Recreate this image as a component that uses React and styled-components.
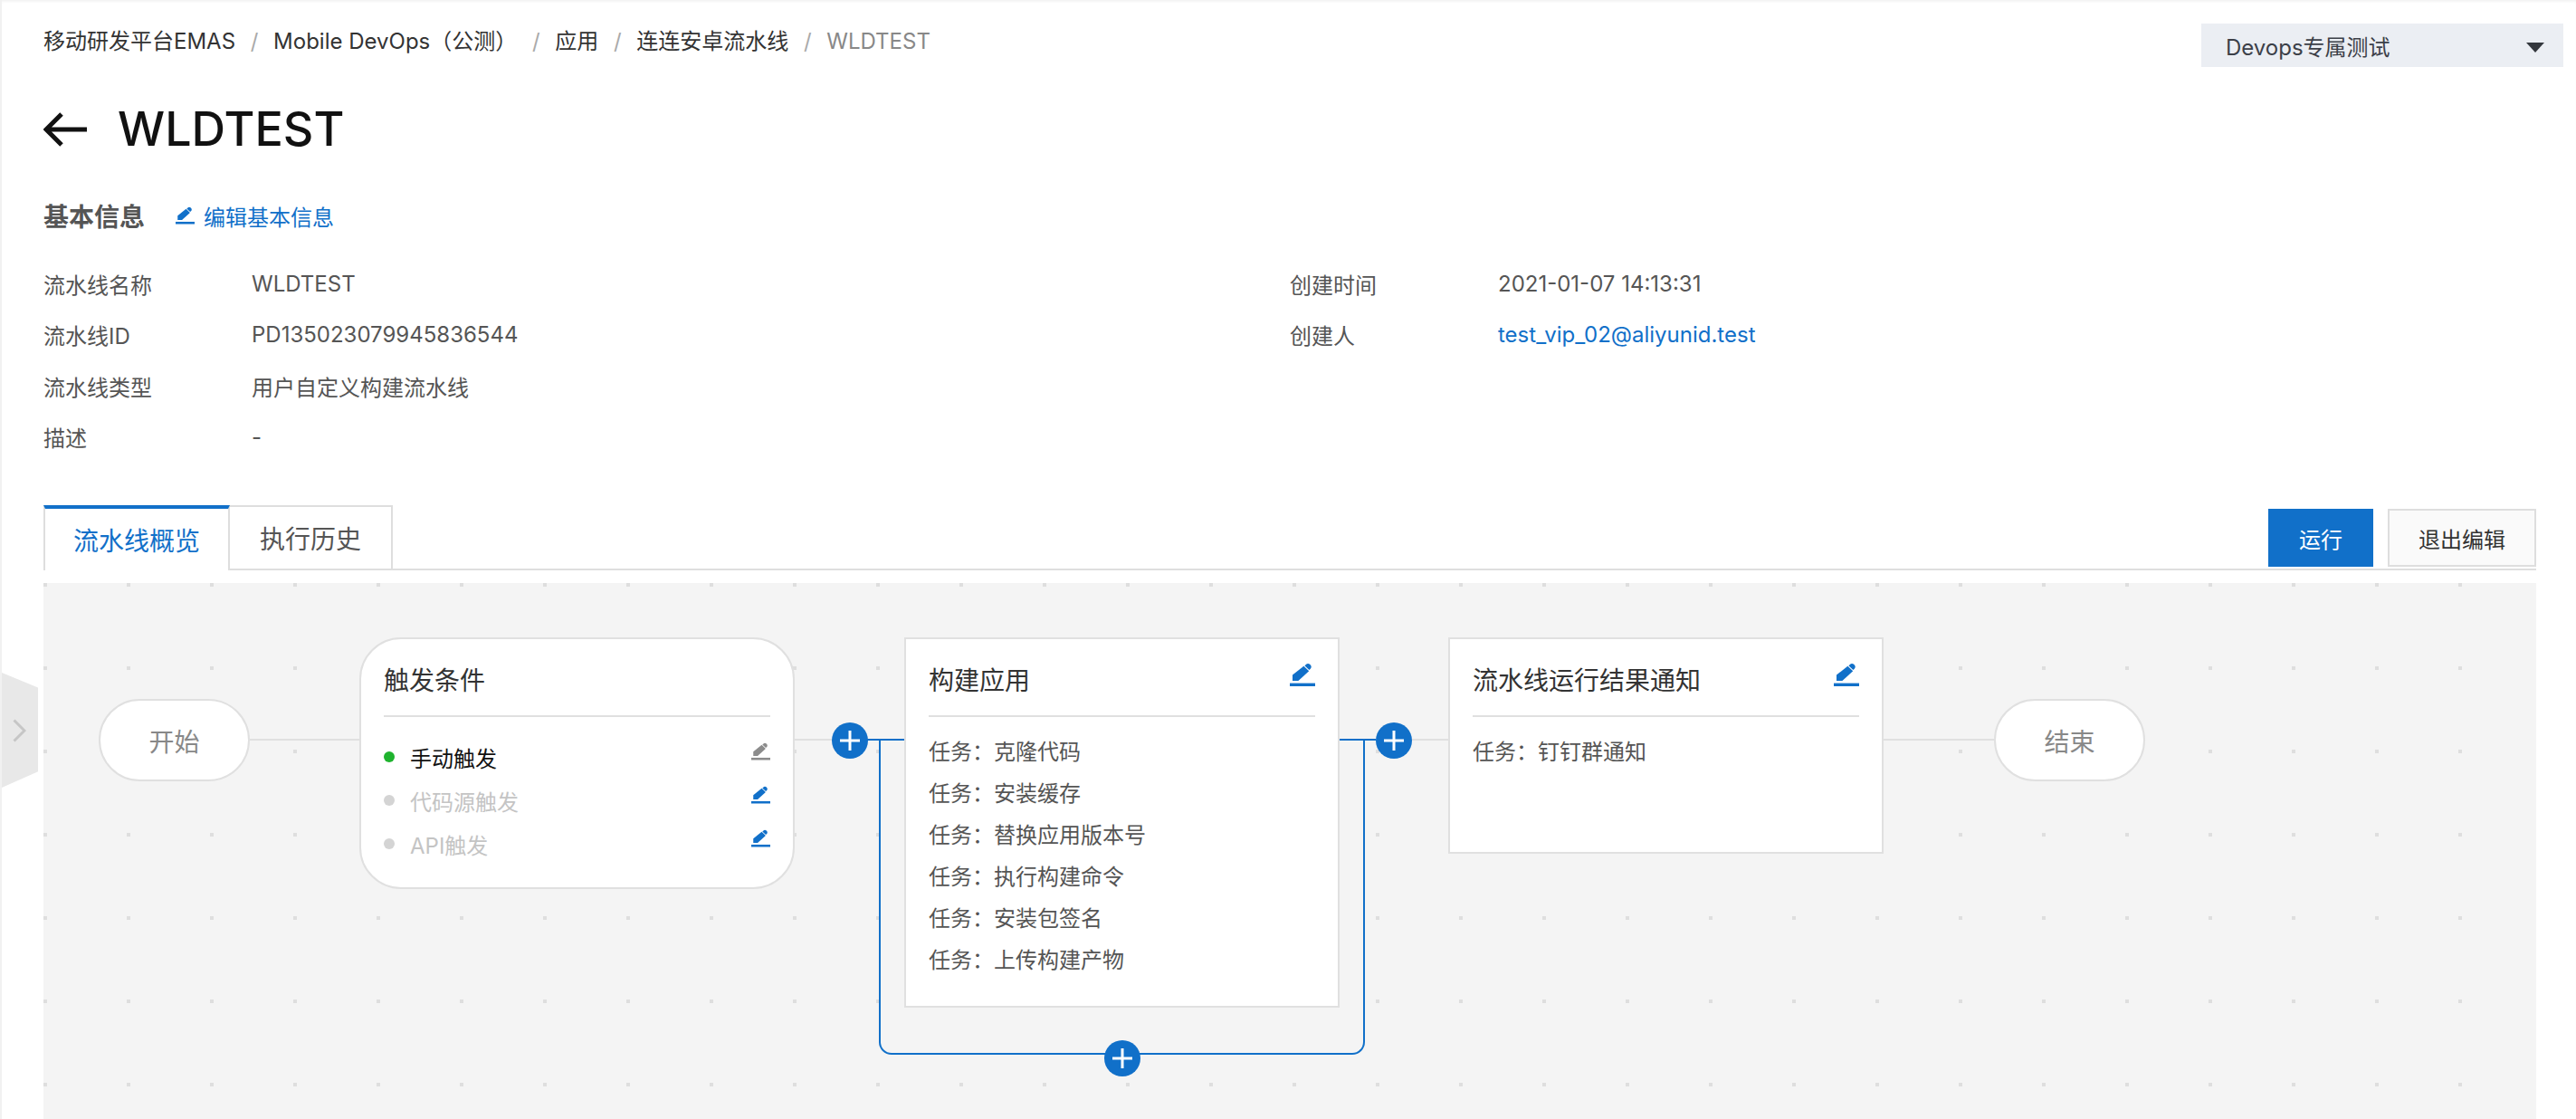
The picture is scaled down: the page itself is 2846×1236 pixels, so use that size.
import React from "react";
import styled, { createGlobalStyle } from "styled-components";

const BLUE = "#1170c9";
const LINE = "#e0e0e0";

const GlobalStyle = createGlobalStyle`
  html, body {
    margin: 0;
    padding: 0;
    background: #fff;
  }
  body {
    font-family: Inter, "Noto Sans CJK SC", sans-serif;
    font-size: 24px;
    color: #333;
  }
`;

const Page = styled.div`
  position: relative;
  display: flex;
  flex-direction: column;
  box-sizing: border-box;
  width: 2846px;
  height: 1236px;
  padding: 26px 44px 0 46px;
  border-left: 2px solid #f1f1f1;
  overflow: hidden;
  box-shadow: inset 0 3px 3px -1px rgba(0, 0, 0, 0.05);
`;

const TopBar = styled.div`
  display: flex;
  justify-content: space-between;
  align-items: flex-start;
  margin-right: -30px;
`;

const Crumbs = styled.div`
  display: flex;
  align-items: center;
  height: 40px;
  white-space: nowrap;
  line-height: 40px;
`;

const Crumb = styled.span`
  color: ${(p) => (p.$last ? "#888" : "#333")};
`;

const Slash = styled.span`
  width: 42px;
  text-align: center;
  color: #aaa;
`;

const Select = styled.div`
  display: flex;
  justify-content: space-between;
  align-items: center;
  box-sizing: border-box;
  width: 400px;
  height: 48px;
  padding: 0 21px 0 27px;
  background: #ebeef3;
  color: #3c4048;
`;

const Caret = styled.span`
  width: 0;
  height: 0;
  margin-top: 4px;
  border-left: 10.5px solid transparent;
  border-right: 10.5px solid transparent;
  border-top: 11px solid #33373d;
`;

const TitleRow = styled.div`
  display: flex;
  align-items: center;
  gap: 34px;
  height: 64px;
  margin-top: 37px;
`;

const Title = styled.h1`
  margin: 0;
  font-size: 52px;
  line-height: 64px;
  font-weight: 500;
  color: #111;
`;

const SectionHead = styled.div`
  display: flex;
  align-items: center;
  gap: 34px;
  height: 40px;
  margin-top: 43px;
`;

const SectionTitle = styled.span`
  font-size: 28px;
  font-weight: 700;
  color: #555;
`;

const EditLink = styled.a`
  display: flex;
  align-items: center;
  gap: 10px;
  color: ${BLUE};
`;

const InfoGrid = styled.div`
  display: grid;
  grid-template-columns: 1377px 1fr;
  margin-top: 27px;
  height: 226px;
`;

const InfoColumn = styled.div`
  display: grid;
  grid-auto-rows: 56.5px;
  align-content: start;
`;

const InfoRow = styled.div`
  display: grid;
  grid-template-columns: 230px 1fr;
  align-items: center;
  color: #555;
`;

const InfoLink = styled.a`
  color: ${BLUE};
`;

const TabBar = styled.div`
  display: flex;
  justify-content: space-between;
  height: 72px;
  margin-top: 47px;
  box-sizing: border-box;
  border-bottom: 2px solid #dedede;
`;

const Tabs = styled.div`
  display: flex;
`;

const Tab = styled.div`
  display: flex;
  align-items: center;
  justify-content: center;
  box-sizing: border-box;
  width: ${(p) => p.$w}px;
  height: ${(p) => (p.$active ? 72 : 70)}px;
  font-size: 28px;
  background: #fff;
  color: ${(p) => (p.$active ? BLUE : "#555")};
  border-top: ${(p) => (p.$active ? `4px solid ${BLUE}` : "2px solid #dedede")};
  border-left: ${(p) => (p.$active ? "2px solid #dedede" : "none")};
  border-right: 2px solid #dedede;
`;

const Actions = styled.div`
  display: flex;
  gap: 16px;
  margin-top: 4px;
`;

const Button = styled.button`
  box-sizing: border-box;
  width: ${(p) => p.$w}px;
  height: 64px;
  padding: 0;
  font: inherit;
  border: 2px solid ${(p) => (p.$primary ? BLUE : "#dedede")};
  background: ${(p) => (p.$primary ? BLUE : "#fafafa")};
  color: ${(p) => (p.$primary ? "#fff" : "#333")};
`;

const Canvas = styled.div`
  position: relative;
  flex: 1;
  margin-top: 14px;
  overflow: hidden;
  background-color: #f4f4f4;
  background-image: linear-gradient(to bottom, transparent 4px, #f4f4f4 4px),
    linear-gradient(to right, #dedede 4px, #f4f4f4 4px);
  background-size: 92px 92px;
`;

const Wire = styled.div`
  position: absolute;
  top: 172px;
  left: ${(p) => p.$x}px;
  width: ${(p) => p.$w}px;
  height: 2px;
  background: ${(p) => (p.$blue ? BLUE : LINE)};
`;

const Bracket = styled.div`
  position: absolute;
  left: 923px;
  top: 173px;
  box-sizing: border-box;
  width: 537px;
  height: 348px;
  border: 2px solid ${BLUE};
  border-top: none;
  border-radius: 0 0 14px 14px;
`;

const Pill = styled.div`
  position: absolute;
  left: ${(p) => p.$x}px;
  top: 128px;
  display: flex;
  align-items: center;
  justify-content: center;
  box-sizing: border-box;
  width: 167px;
  height: 91px;
  font-size: 28px;
  color: #888;
  background: #fff;
  border: 2px solid ${LINE};
  border-radius: 46px;
`;

const Card = styled.div`
  position: absolute;
  left: ${(p) => p.$x}px;
  top: 60px;
  box-sizing: border-box;
  width: 481px;
  height: ${(p) => p.$h}px;
  padding: 0 25px;
  background: #fff;
  border: 2px solid ${LINE};
  border-radius: ${(p) => p.$r || 0}px;
`;

const CardHead = styled.div`
  display: flex;
  justify-content: space-between;
  align-items: flex-start;
  box-sizing: border-box;
  height: 86px;
  padding-top: 26px;
  border-bottom: 2px solid ${LINE};
`;

const CardTitle = styled.span`
  font-size: 28px;
  line-height: 40px;
  color: #333;
`;

const TaskList = styled.div`
  margin-top: 16px;
`;

const Task = styled.div`
  display: flex;
  height: 46px;
  line-height: 46px;
  color: #555;
`;

const TaskLabel = styled.span`
  width: 72px;
`;

const TriggerList = styled.div`
  margin-top: 20px;
`;

const Trigger = styled.div`
  display: flex;
  align-items: center;
  height: 48px;
  color: ${(p) => (p.$on ? "#111" : "#c4c4c4")};
`;

const Dot = styled.span`
  width: 12px;
  height: 12px;
  margin-right: 17px;
  border-radius: 50%;
  background: ${(p) => (p.$on ? "#1fb32e" : "#d4d4d4")};
`;

const TriggerName = styled.span`
  flex: 1;
`;

const RowPen = styled.span`
  display: flex;
  margin-bottom: 12px;
`;

const PlusButton = styled.div`
  position: absolute;
  left: ${(p) => p.$x}px;
  top: ${(p) => p.$y}px;
  display: flex;
  align-items: center;
  justify-content: center;
  width: 40px;
  height: 40px;
  border-radius: 50%;
  background: ${BLUE};
`;

const SideToggle = styled.div`
  position: absolute;
  left: 0;
  top: 743px;
  display: flex;
  align-items: center;
  width: 40px;
  height: 127px;
  padding-left: 12px;
  box-sizing: border-box;
  background: #e8e8e8;
  clip-path: polygon(0 0, 100% 13%, 100% 86%, 0 100%);
`;

const Pen = ({ size = 28, color = BLUE }) => (
  <svg width={size} height={(size * 26) / 28} viewBox="0 0 28 26" fill={color}>
    <path d="M3 20v-6.4L15.4 3.7l5.8 5.6L9.4 20z" />
    <path d="M17.6 2.2a3.4 3.4 0 0 1 5 4.7l-1.2 1.1-5-4.8z" />
    <rect x="0" y="22.6" width="28" height="3.4" />
  </svg>
);

const Plus = () => (
  <svg width="22" height="22" viewBox="0 0 22 22" stroke="#fff" strokeWidth="3">
    <path d="M11 0v22M0 11h22" />
  </svg>
);

const BackArrow = () => (
  <svg width="48" height="38" viewBox="0 0 48 38" fill="none" stroke="#111" strokeWidth="5">
    <path d="M48 19H4M20 2 3 19l17 17" />
  </svg>
);

const Chevron = () => (
  <svg width="15" height="26" viewBox="0 0 15 26" fill="none" stroke="#c6c6c6" strokeWidth="3">
    <path d="M1.5 1.5 13 13 1.5 24.5" />
  </svg>
);

const crumbs = ["移动研发平台EMAS", "Mobile DevOps（公测）", "应用", "连连安卓流水线"];

const leftInfo = [
  ["流水线名称", "WLDTEST"],
  ["流水线ID", "PD135023079945836544"],
  ["流水线类型", "用户自定义构建流水线"],
  ["描述", "-"],
];

const triggers = [
  { name: "手动触发", on: true },
  { name: "代码源触发" },
  { name: "API触发" },
];

const tasks = ["克隆代码", "安装缓存", "替换应用版本号", "执行构建命令", "安装包签名", "上传构建产物"];

const App = () => {
  return (
    <Page>
      <GlobalStyle />
      <TopBar>
        <Crumbs>
          {crumbs.map((c) => (
            <React.Fragment key={c}>
              <Crumb>{c}</Crumb>
              <Slash>/</Slash>
            </React.Fragment>
          ))}
          <Crumb $last>WLDTEST</Crumb>
        </Crumbs>
        <Select>
          <span>Devops专属测试</span>
          <Caret />
        </Select>
      </TopBar>

      <TitleRow>
        <BackArrow />
        <Title>WLDTEST</Title>
      </TitleRow>

      <SectionHead>
        <SectionTitle>基本信息</SectionTitle>
        <EditLink>
          <Pen size={21} />
          编辑基本信息
        </EditLink>
      </SectionHead>

      <InfoGrid>
        <InfoColumn>
          {leftInfo.map(([k, v]) => (
            <InfoRow key={k}>
              <span>{k}</span>
              <span>{v}</span>
            </InfoRow>
          ))}
        </InfoColumn>
        <InfoColumn>
          <InfoRow>
            <span>创建时间</span>
            <span>2021-01-07 14:13:31</span>
          </InfoRow>
          <InfoRow>
            <span>创建人</span>
            <InfoLink>test_vip_02@aliyunid.test</InfoLink>
          </InfoRow>
        </InfoColumn>
      </InfoGrid>

      <TabBar>
        <Tabs>
          <Tab $w={206} $active>
            流水线概览
          </Tab>
          <Tab $w={180}>执行历史</Tab>
        </Tabs>
        <Actions>
          <Button $w={116} $primary>
            运行
          </Button>
          <Button $w={164}>退出编辑</Button>
        </Actions>
      </TabBar>

      <Canvas>
        <Wire $x={228} $w={121} />
        <Wire $x={829} $w={42} />
        <Wire $x={910} $w={41} $blue />
        <Wire $x={1432} $w={40} $blue />
        <Wire $x={1512} $w={40} />
        <Wire $x={2033} $w={122} />
        <Bracket />

        <Pill $x={61}>开始</Pill>

        <Card $x={349} $h={278} $r={46}>
          <CardHead>
            <CardTitle>触发条件</CardTitle>
          </CardHead>
          <TriggerList>
            {triggers.map((t) => (
              <Trigger key={t.name} $on={t.on}>
                <Dot $on={t.on} />
                <TriggerName>{t.name}</TriggerName>
                <RowPen>
                  <Pen size={21} color={t.on ? "#8c8c8c" : BLUE} />
                </RowPen>
              </Trigger>
            ))}
          </TriggerList>
        </Card>

        <Card $x={951} $h={409}>
          <CardHead>
            <CardTitle>构建应用</CardTitle>
            <Pen />
          </CardHead>
          <TaskList>
            {tasks.map((t) => (
              <Task key={t}>
                <TaskLabel>任务：</TaskLabel>
                <span>{t}</span>
              </Task>
            ))}
          </TaskList>
        </Card>

        <Card $x={1552} $h={239}>
          <CardHead>
            <CardTitle>流水线运行结果通知</CardTitle>
            <Pen />
          </CardHead>
          <TaskList>
            <Task>
              <TaskLabel>任务：</TaskLabel>
              <span>钉钉群通知</span>
            </Task>
          </TaskList>
        </Card>

        <Pill $x={2155}>结束</Pill>

        <PlusButton $x={870.5} $y={154}>
          <Plus />
        </PlusButton>
        <PlusButton $x={1472} $y={154}>
          <Plus />
        </PlusButton>
        <PlusButton $x={1171.5} $y={505}>
          <Plus />
        </PlusButton>
      </Canvas>

      <SideToggle>
        <Chevron />
      </SideToggle>
    </Page>
  );
};

export default App;
